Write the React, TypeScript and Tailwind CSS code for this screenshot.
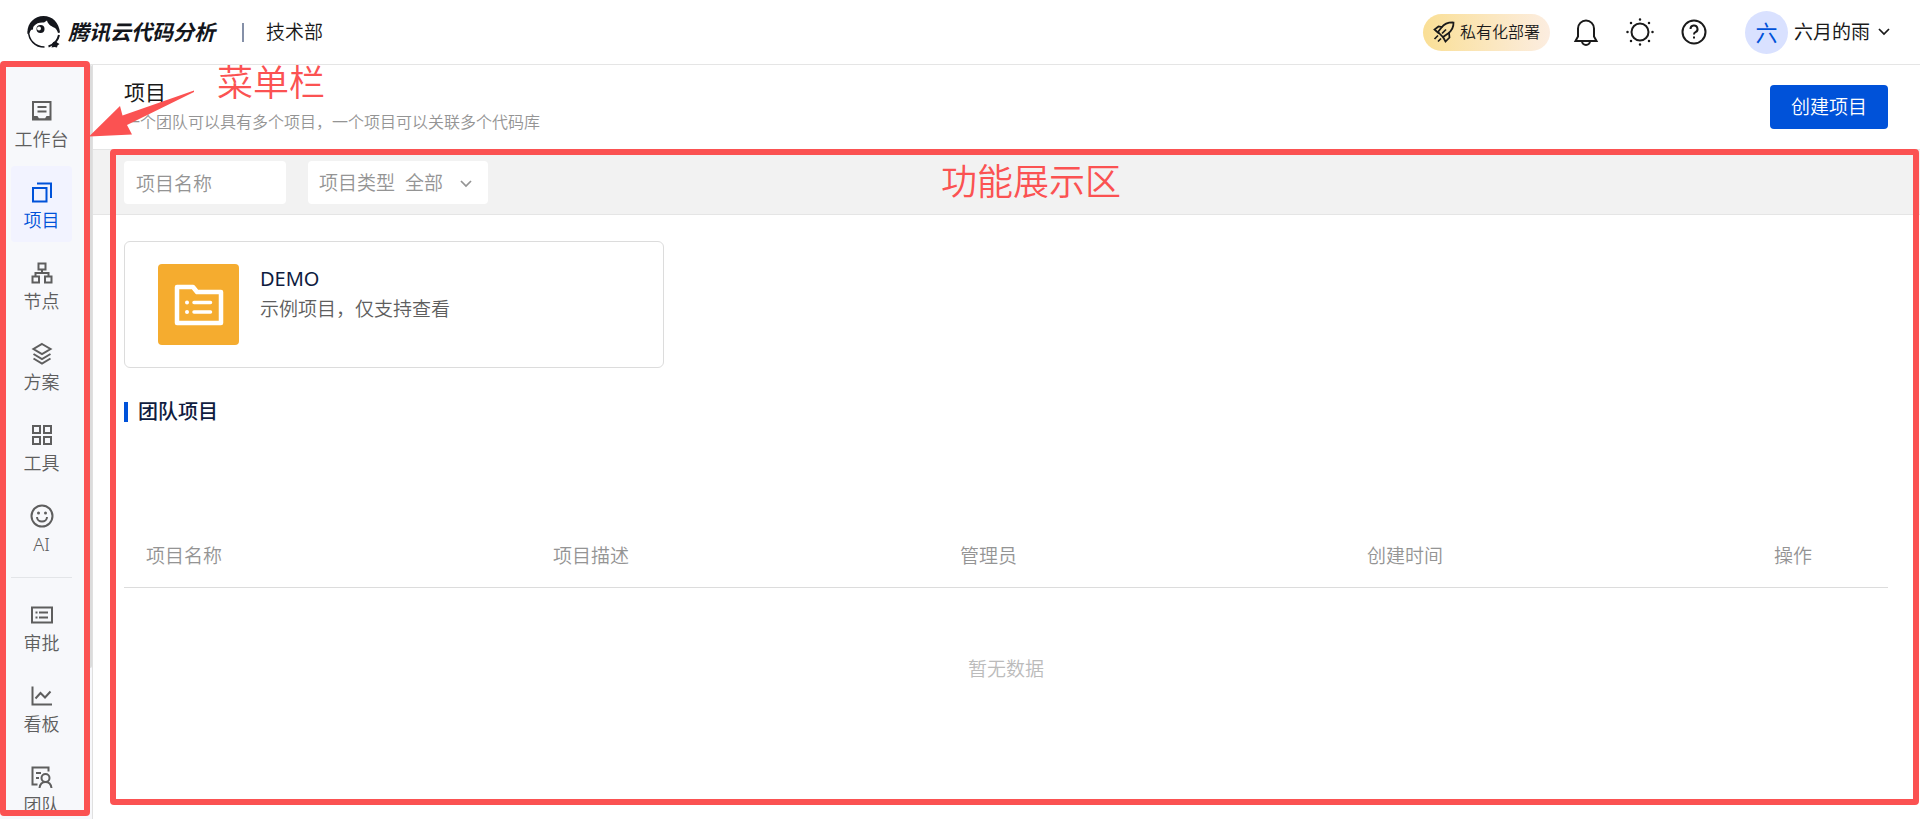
import type { ReactNode } from 'react';

type NavItem = { key: string; label: string; icon: ReactNode };

function NavIcon({ children }: { children: ReactNode }) {
  return (
    <svg
      viewBox="0 0 24 24"
      className="h-6 w-6"
      fill="none"
      stroke="currentColor"
      strokeWidth="2"
      aria-hidden="true"
    >
      {children}
    </svg>
  );
}

const mainNav: NavItem[] = [
  {
    key: 'workspace',
    label: '工作台',
    icon: (
      <>
        <path d="M3 3h17.5v17.5H3z" />
        <path d="M7.5 8h9M7.500 12.500h9" />
        <path d="M3 17h4.500l1.500 2.500h6l1.500-2.500h4.500v4H3z" fill="currentColor" stroke="none" />
      </>
    ),
  },
  {
    key: 'project',
    label: '项目',
    icon: (
      <>
        <path d="M3 8h13.5v13.5H3z" />
        <path d="M7 3.5h14V18" />
      </>
    ),
  },
  {
    key: 'node',
    label: '节点',
    icon: (
      <>
        <path d="M8.5 2.5h7v6h-7zM2.5 15.5H9v6H2.5zM15 15.5h6.5v6H15z" />
        <path d="M12 8.5V12M5.5 15.5V12h13v3.5" />
      </>
    ),
  },
  {
    key: 'scheme',
    label: '方案',
    icon: (
      <>
        <path d="M12 2l8.5 5-8.5 5-8.5-5z" />
        <path d="M3.500 12l8.500 5 8.500-5M3.500 16.500l8.500 5 8.500-5" />
      </>
    ),
  },
  {
    key: 'tool',
    label: '工具',
    icon: <path d="M3 3h7v7H3zM14 3h7v7h-7zM3 14h7v7H3zM14 14h7v7h-7z" />,
  },
  {
    key: 'ai',
    label: 'AI',
    icon: (
      <>
        <circle cx="12" cy="12" r="10.5" />
        <path d="M7 13a5 4.500 0 0 0 10 0" />
        <circle cx="8.5" cy="9" r="1.5" fill="currentColor" stroke="none" />
        <circle cx="15.5" cy="9" r="1.5" fill="currentColor" stroke="none" />
      </>
    ),
  },
];

const manageNav: NavItem[] = [
  {
    key: 'approve',
    label: '审批',
    icon: (
      <>
        <path d="M2 4.500h20v15H2z" />
        <path d="M9 9.500h9M9 14.500h9M5.500 9.500h2M5.500 14.500h2" />
      </>
    ),
  },
  {
    key: 'board',
    label: '看板',
    icon: (
      <>
        <path d="M2.500 2.500v18H22" />
        <path d="M5.500 14.500l5-5.500 4.500 4.500 5.500-6" />
      </>
    ),
  },
  {
    key: 'team',
    label: '团队',
    icon: (
      <>
        <path d="M7.500 19.500h-5v-17h16v4" />
        <path d="M6 8h5M6 13h3" />
        <circle cx="15.5" cy="13" r="4" />
        <path d="M9.500 23c.5-4 3-6 6-6s5.500 2 6 6" />
      </>
    ),
  },
];

const columns = ['项目名称', '项目描述', '管理员', '创建时间', '操作'];

function NavLink({ item, active }: { item: NavItem; active?: boolean }) {
  return (
    <a
      href="#"
      className={
        active
          ? 'flex h-[76px] shrink-0 flex-col items-center gap-1 rounded bg-[#f2f3ff] pt-3.5 text-[#0052d9]'
          : 'flex h-[76px] shrink-0 flex-col items-center gap-1 rounded pt-3.5 text-[#5e5e5e]'
      }
    >
      <NavIcon>{item.icon}</NavIcon>
      <span lang="zh" className="text-[18px] leading-6">
        {item.label}
      </span>
    </a>
  );
}

function Sidebar() {
  return (
    <aside className="relative w-[93px] shrink-0 overflow-hidden border-r border-[#e0e0e0] bg-[#f7f8fb]">
      <nav className="mr-5 ml-[11px] flex flex-col gap-[5px] pt-5">
        {mainNav.map((item) => (
          <NavLink key={item.key} item={item} active={item.key === 'project'} />
        ))}
        <hr className="my-1.5 border-[#e3e5e8]" />
        {manageNav.map((item) => (
          <NavLink key={item.key} item={item} />
        ))}
      </nav>
      {/* scrollbar thumb */}
      <div className="absolute top-0 right-0 h-[80%] w-1 rounded bg-[#dcdcdc]" />
    </aside>
  );
}

function Chevron({ className }: { className: string }) {
  return (
    <svg viewBox="0 0 12 8" className={className} fill="none" stroke="currentColor" strokeWidth="1.75" aria-hidden="true">
      <path d="M1 1l5 5 5-5" />
    </svg>
  );
}

function Logo() {
  return (
    <svg viewBox="0 0 34 34" className="h-[34px] w-[34px]" fill="none" aria-hidden="true">
      {/* head */}
      <path
        d="M.5 19C-.5 9 7 1 16.500 1 25.500 1 32 7.500 33 17.500l-2 .5c-1-3-2-4.500-4-5.500-3-1.500-6-3-7-7L17 7.500c-4-.5-7.500.5-10 3.500-1 1-1 2.500-1 4-1-1-2-.5-3.500 3z"
        fill="#14161c"
      />
      <path d="M1.500 16C1.500 25 8 32 17.500 32" stroke="#14161c" strokeWidth="1.5" />
      <path d="M21.500 31.500c3-1 5-2.500 6.500-4.500M32 20c-.5 2.500-1.500 4.500-3 6.500" stroke="#14161c" strokeWidth="2" />
      {/* eye */}
      <circle cx="13.5" cy="14" r="4" fill="#14161c" />
      <circle cx="12" cy="13.500" r="2" fill="#fff" />
      {/* tail */}
      <path d="M26 27.500l3-2 1 2 2.500 1.500-2 1.500-.5 2-2.500-.5-3 .5z" fill="#14161c" />
    </svg>
  );
}

function TopBar() {
  return (
    <header className="flex h-[65px] shrink-0 items-center justify-between border-b border-[#e5e5e5] bg-white pr-[30px] pl-[27px] text-[#1a1a1a]">
      <div className="flex items-center">
        <Logo />
        <span className="ml-[7px] text-[21px] leading-8 font-bold text-[#14161c] italic">腾讯云代码分析</span>
        <span className="ml-[27px] h-[19px] w-0.5 bg-[#8590a8]" />
        <span className="ml-[22px] text-[19px] leading-8">技术部</span>
      </div>
      <div className="flex items-center">
        <button
          type="button"
          className="flex h-[37px] items-center gap-[5px] rounded-full bg-linear-to-r from-[#fadf95] to-[#fcede0] px-2.5 text-[16px]"
        >
          <svg viewBox="0 0 22 22" className="h-[22px] w-[22px]" fill="none" stroke="currentColor" strokeWidth="1.75" aria-hidden="true">
            <path d="M20.500 1.500c-5-.2-9 1-12 5L5 11l5 5 5-3.500c4-3 5.700-6 5.500-11z" />
            <path d="M9.500 6L5.500 5.500 1.500 8.500 6 12.500M16 12l.5 4.500-4 4-2.500-4.500" />
            <path d="M9 12.500l4-4" />
            <path d="M5 14.500L1.500 18M8 17.500L5 20.500" />
          </svg>
          私有化部署
        </button>
        <button type="button" aria-label="通知" className="ml-[22px]">
          <svg viewBox="0 0 28 28" className="h-7 w-7" fill="none" stroke="currentColor" strokeWidth="2" aria-hidden="true">
            <path d="M6 18.500v-8a8 8 0 0 1 16 0v8l2.500 4.500h-21z" />
            <path d="M10 23a4 4 0 0 0 8 0" />
          </svg>
        </button>
        <button type="button" aria-label="主题" className="ml-[26px]">
          <svg viewBox="0 0 28 28" className="h-7 w-7" fill="none" stroke="currentColor" strokeWidth="2" aria-hidden="true">
            <circle cx="14" cy="14" r="8.5" />
            <path
              d="M14 1.500h.01M14 26.500h.01M1.500 14h.01M26.500 14h.01M5 5h.01M23 5h.01M5 23h.01M23 23h.01"
              strokeLinecap="round"
              strokeWidth="2.5"
            />
          </svg>
        </button>
        <button type="button" aria-label="帮助" className="ml-[26px]">
          <svg viewBox="0 0 28 28" className="h-7 w-7" fill="none" stroke="currentColor" strokeWidth="2" aria-hidden="true">
            <circle cx="14" cy="14" r="11.5" />
            <path d="M10.500 11a3.500 3.500 0 1 1 5 3.200c-1 .5-1.500 1-1.500 2.300" />
            <path d="M14 18.500v2" />
          </svg>
        </button>
        <button type="button" className="ml-[37px] flex items-center text-[19px] font-normal">
          <span className="mr-1.5 flex h-[43px] w-[43px] items-center justify-center rounded-full bg-[#d9e1ff] text-[22px] text-[#0052d9]">
            六
          </span>
          六月的雨
          <Chevron className="ml-2 h-2 w-3" />
        </button>
      </div>
    </header>
  );
}

function FilterBar() {
  return (
    <div className="flex h-[65px] items-center gap-[22px] border-b border-[#e5e5e5] bg-[#f2f2f2] px-[31px] text-[19px] text-[#949494]">
      <input
        type="text"
        aria-label="项目名称"
        placeholder="项目名称"
        className="h-[43px] w-[162px] rounded bg-white px-3 pt-[3px] outline-none placeholder:text-[#949494]"
      />
      <div className="flex h-[43px] w-[180px] items-center rounded bg-white pt-[3px] pr-4 pl-[11px]">
        <label htmlFor="project-type">项目类型</label>
        <select id="project-type" className="ml-2.5 flex-1 appearance-none bg-transparent outline-none">
          <option>全部</option>
        </select>
        <Chevron className="h-2 w-3" />
      </div>
    </div>
  );
}

function DemoCard() {
  return (
    <a href="#" className="flex h-[127px] w-[540px] items-center rounded-md border border-[#dcdcdc] px-[33px]">
      <span className="flex h-[81px] w-[81px] items-center justify-center rounded bg-[#f5ac2f]">
        <svg viewBox="0 0 50 42" className="h-[42px] w-[50px]" fill="none" stroke="#fff" strokeWidth="4.5" strokeLinejoin="round" aria-hidden="true">
          <path d="M3 3h16l4 5h24v31H3z" />
          <path d="M20 18.500h16.500M20 28h16.500" strokeLinecap="round" strokeWidth="3.5" />
          <path d="M13 18.500h.01M13 28h.01" strokeLinecap="round" strokeWidth="4" />
        </svg>
      </span>
      <span className="ml-[21px] flex flex-col self-start pt-[22px] leading-[30px]">
        <span className="text-[20px] font-normal text-[#0f1c3f]">DEMO</span>
        <span className="text-[19px] text-[#5e5e5e]">示例项目，仅支持查看</span>
      </span>
    </a>
  );
}

function ProjectTable() {
  return (
    <table className="mt-[98px] w-full table-fixed text-left text-[19px]">
      <thead>
        <tr className="h-[62px] border-b border-[#dcdcdc] text-[#949494]">
          {columns.map((name) => (
            <th key={name} scope="col" className="pl-[22px] font-[350] last:w-[136px]">
              {name}
            </th>
          ))}
        </tr>
      </thead>
      <tbody>
        <tr>
          <td colSpan={columns.length} className="h-[164px] text-center text-[#bbb]">
            暂无数据
          </td>
        </tr>
      </tbody>
    </table>
  );
}

// Red marks drawn over the page: the two framed areas, their names and the arrow
function Annotations() {
  return (
    <div className="pointer-events-none absolute inset-0 text-[36px] leading-[44px] text-[#fb5252]">
      <div className="absolute top-[61px] bottom-[3px] left-0 w-[90px] rounded border-6 border-[#fb5252]" />
      <div className="absolute top-[149px] right-px bottom-[14px] left-[110px] rounded border-6 border-[#fb5252]" />
      <svg viewBox="0 0 106 48" className="absolute top-[90px] left-[89px] h-12 w-[106px]" fill="#fb5252" aria-hidden="true">
        <path d="M0 46.500L31 16l2.500 9.500L105 .5V2L38 35l5 9.500z" />
      </svg>
      <span className="absolute top-[61px] left-[217px]">菜单栏</span>
      <span className="absolute top-[160px] left-[941px]">功能展示区</span>
    </div>
  );
}

export default function App() {
  return (
    <div className="relative flex h-screen flex-col overflow-hidden bg-white font-['Noto_Sans','Noto_Sans_CJK_SC',sans-serif] font-[350]">
      <TopBar />
      <div className="flex min-h-0 flex-1">
        <Sidebar />
        <main className="min-w-0 flex-1">
          <div className="flex h-[85px] items-center justify-between border-b border-[#e5e5e5] pr-8 pl-[31px]">
            <div className="pb-0.5">
              <h1 className="text-[21px] leading-8 font-normal text-[#1a1a1a]">项目</h1>
              <p className="text-[16px] leading-7 text-[#949494]">一个团队可以具有多个项目，一个项目可以关联多个代码库</p>
            </div>
            <button type="button" className="h-11 rounded bg-[#0052d9] px-[21px] text-[19px] text-white">
              创建项目
            </button>
          </div>
          <FilterBar />
          <section className="pt-[26px] pr-8 pl-[31px]">
            <DemoCard />
            <h2 className="mt-[29px] flex items-center gap-2.5 text-[20px] leading-[30px] font-medium text-[#0f1c3f]">
              <span className="h-5 w-1 bg-[#0052d9]" />
              团队项目
            </h2>
            <ProjectTable />
          </section>
        </main>
      </div>
      <Annotations />
    </div>
  );
}
